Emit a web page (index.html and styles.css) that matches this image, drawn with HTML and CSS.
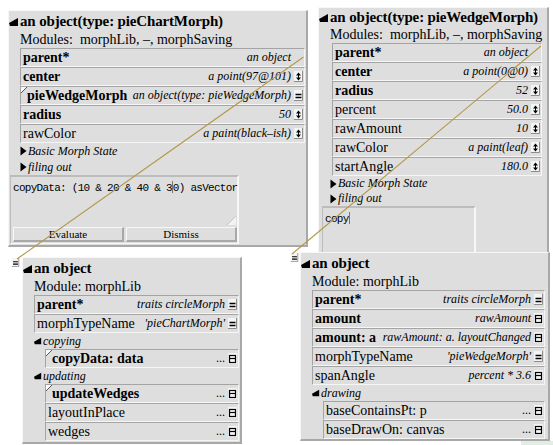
FILE: index.html
```html
<!DOCTYPE html>
<html>
<head>
<meta charset="utf-8">
<link rel="stylesheet" href="styles.css">
</head>
<body>
<svg class="defs" width="0" height="0">
  <defs>
    <symbol id="ud" viewBox="0 0 9 11">
      <rect x="0" y="0" width="9" height="11" fill="#f4f4f4"/>
      <path d="M8.5 0V10.5H0" fill="none" stroke="#8c8c8c"/>
      <path d="M2 4.5L4.5 1.5L7 4.5Z M2 6.5L4.5 9.5L7 6.5Z" fill="#000"/>
      <path d="M4.5 4V7" stroke="#000" stroke-width="1"/>
    </symbol>
    <symbol id="eq" viewBox="0 0 9 11">
      <rect x="0" y="0" width="9" height="11" fill="#f4f4f4"/>
      <path d="M8.5 0V10.5H0" fill="none" stroke="#8c8c8c"/>
      <path d="M1.5 4.5H7.5M1.5 7.5H7.5" stroke="#000" stroke-width="1.3"/>
    </symbol>
    <symbol id="box" viewBox="0 0 9 11">
      <rect x="0" y="0" width="9" height="11" fill="#f4f4f4"/>
      <rect x="1.5" y="2.5" width="6" height="7" fill="none" stroke="#000" stroke-width="1.2"/>
      <path d="M1.5 5.5H7.5" stroke="#000" stroke-width="1.2"/>
    </symbol>
    <symbol id="tri" viewBox="0 0 10 10">
      <path d="M0 6L9 1L9 9L1 9Z" fill="#000"/>
    </symbol>
    <symbol id="rtri" viewBox="0 0 7 10">
      <path d="M0.5 0.5L6.5 5L0.5 9.5Z" fill="#000"/>
    </symbol>
    <symbol id="mark" viewBox="0 0 6 6">
      <path d="M0 0H6L0 6Z" fill="#fafafa"/>
      <path d="M6 0L0 6" stroke="#555" stroke-width="1"/>
    </symbol>
  </defs>
</svg>

<!-- pieChartMorph outliner -->
<div class="outliner ol-chart">
  <div class="ol-title"><svg class="tri"><use href="#tri"/></svg><span>an object(type: pieChartMorph)</span></div>
  <div class="ol-module">Modules:&nbsp; morphLib, –, morphSaving</div>
  <div class="slots">
    <div class="slot"><span class="name b">parent*</span><span class="val">an object</span><span class="nobtn"></span></div>
    <div class="slot"><span class="name b">center</span><span class="val">a point(97@101)</span><svg class="btn"><use href="#ud"/></svg></div>
    <div class="slot"><svg class="mark"><use href="#mark"/></svg><span class="name b">pieWedgeMorph</span><span class="val">an object(type: pieWedgeMorph)</span><svg class="btn"><use href="#eq"/></svg></div>
    <div class="slot"><span class="name b">radius</span><span class="val">50</span><svg class="btn"><use href="#ud"/></svg></div>
    <div class="slot"><span class="name">rawColor</span><span class="val">a paint(black–ish)</span><svg class="btn"><use href="#ud"/></svg></div>
  </div>
  <div class="cat"><svg class="rtri"><use href="#rtri"/></svg><span>Basic Morph State</span></div>
  <div class="cat"><svg class="rtri"><use href="#rtri"/></svg><span>filing out</span></div>
  <div class="evaluator ev-chart">
    <div class="ev-text">copyData: (10 &amp; 20 &amp; 40 &amp; 3<span class="cursor"></span>0) asVector</div>
    <svg class="grip" width="9" height="9" viewBox="0 0 9 9"><path d="M9 0V9H0Z" fill="#f2f2f2"/><path d="M0 9L9 0" stroke="#c4c4c4"/></svg>
    <div class="ev-buttons">
      <div class="ev-btn">Evaluate</div>
      <div class="ev-btn">Dismiss</div>
    </div>
  </div>
</div>

<!-- pieWedgeMorph outliner -->
<div class="outliner ol-wedge">
  <div class="ol-title"><svg class="tri"><use href="#tri"/></svg><span>an object(type: pieWedgeMorph)</span></div>
  <div class="ol-module">Modules:&nbsp; morphLib, –, morphSaving</div>
  <div class="slots">
    <div class="slot"><span class="name b">parent*</span><span class="val">an object</span><span class="nobtn"></span></div>
    <div class="slot"><span class="name b">center</span><span class="val">a point(0@0)</span><svg class="btn"><use href="#ud"/></svg></div>
    <div class="slot"><span class="name b">radius</span><span class="val">52</span><svg class="btn"><use href="#ud"/></svg></div>
    <div class="slot"><span class="name">percent</span><span class="val">50.0</span><svg class="btn"><use href="#ud"/></svg></div>
    <div class="slot"><span class="name">rawAmount</span><span class="val">10</span><svg class="btn"><use href="#ud"/></svg></div>
    <div class="slot"><span class="name">rawColor</span><span class="val">a paint(leaf)</span><svg class="btn"><use href="#ud"/></svg></div>
    <div class="slot"><span class="name">startAngle</span><span class="val">180.0</span><svg class="btn"><use href="#ud"/></svg></div>
  </div>
  <div class="cat"><svg class="rtri"><use href="#rtri"/></svg><span>Basic Morph State</span></div>
  <div class="cat"><svg class="rtri"><use href="#rtri"/></svg><span>filing out</span></div>
  <div class="evaluator ev-wedge">
    <div class="ev-text">copy<span class="cursor"></span></div>
  </div>
</div>

<!-- traits pieWedge (lower right) -->
<svg class="handle h-right"><use href="#eq"/></svg>
<div class="outliner ol-twedge">
  <div class="ol-title"><svg class="tri"><use href="#tri"/></svg><span>an object</span></div>
  <div class="ol-module">Module: morphLib</div>
  <div class="slots">
    <div class="slot"><span class="name b">parent*</span><span class="val">traits circleMorph</span><svg class="btn"><use href="#eq"/></svg></div>
    <div class="slot"><span class="name b">amount</span><span class="val">rawAmount</span><svg class="btn"><use href="#box"/></svg></div>
    <div class="slot"><span class="name b">amount: a</span><span class="val">rawAmount: a. layoutChanged</span><svg class="btn"><use href="#box"/></svg></div>
    <div class="slot"><span class="name">morphTypeName</span><span class="val">'pieWedgeMorph'</span><svg class="btn"><use href="#eq"/></svg></div>
    <div class="slot"><span class="name">spanAngle</span><span class="val">percent * 3.6</span><svg class="btn"><use href="#box"/></svg></div>
  </div>
  <div class="cat"><svg class="tri small"><use href="#tri"/></svg><span>drawing</span></div>
  <div class="slots sub">
    <div class="slot"><span class="name">baseContainsPt: p</span><span class="val dots">...</span><svg class="btn"><use href="#box"/></svg></div>
    <div class="slot"><span class="name">baseDrawOn: canvas</span><span class="val dots">...</span><svg class="btn"><use href="#box"/></svg></div>
  </div>
</div>

<!-- traits pieChart (lower left) -->
<svg class="handle h-left"><use href="#eq"/></svg>
<div class="outliner ol-tchart">
  <div class="ol-title"><svg class="tri"><use href="#tri"/></svg><span>an object</span></div>
  <div class="ol-module">Module: morphLib</div>
  <div class="slots">
    <div class="slot"><span class="name b">parent*</span><span class="val">traits circleMorph</span><svg class="btn"><use href="#eq"/></svg></div>
    <div class="slot"><span class="name">morphTypeName</span><span class="val">'pieChartMorph'</span><svg class="btn"><use href="#eq"/></svg></div>
  </div>
  <div class="cat"><svg class="tri small"><use href="#tri"/></svg><span>copying</span></div>
  <div class="slots sub">
    <div class="slot"><svg class="mark"><use href="#mark"/></svg><span class="name b">copyData: data</span><span class="val dots">...</span><svg class="btn"><use href="#box"/></svg></div>
  </div>
  <div class="cat"><svg class="tri small"><use href="#tri"/></svg><span>updating</span></div>
  <div class="slots sub">
    <div class="slot"><svg class="mark"><use href="#mark"/></svg><span class="name b">updateWedges</span><span class="val dots">...</span><svg class="btn"><use href="#box"/></svg></div>
    <div class="slot"><span class="name">layoutInPlace</span><span class="val dots">...</span><svg class="btn"><use href="#box"/></svg></div>
    <div class="slot"><span class="name">wedges</span><span class="val dots">...</span><svg class="btn"><use href="#box"/></svg></div>
  </div>
</div>

<div class="corner-tab"></div>

<svg class="arrows" width="553" height="445" viewBox="0 0 553 445">
  <line x1="303.5" y1="57" x2="17" y2="259" stroke="#b39848" stroke-width="1.1"/>
  <line x1="541" y1="46" x2="292" y2="254" stroke="#b39848" stroke-width="1.1"/>
</svg>
</body>
</html>
```

FILE: styles.css
```css
html, body {
  margin: 0;
  padding: 0;
}
body {
  position: relative;
  width: 553px;
  height: 445px;
  overflow: hidden;
  background: #ffffff;
  font-family: "Liberation Serif", "DejaVu Serif", serif;
  color: #000;
}
.defs {
  position: absolute;
  width: 0;
  height: 0;
}

/* outliner window */
.outliner {
  position: absolute;
  box-sizing: border-box;
  background: #dedede;
  border-top: 1px solid #f7f7f7;
  border-left: 1px solid #f7f7f7;
  border-right: 2px solid #a8a8a8;
  border-bottom: 2px solid #a8a8a8;
  display: flex;
  flex-direction: column;
  overflow: hidden;
}
.ol-chart { left: 8px; top: 10px; width: 300px; height: 237px; }
.ol-wedge { left: 318px; top: 7px; width: 231px; height: 250px; }
.ol-twedge { left: 300px; top: 252px; width: 250px; height: 189px; }
.ol-tchart { left: 22px; top: 257px; width: 220px; height: 187px; }

.ol-title {
  height: 19px;
  margin-top: 1px;
  display: flex;
  align-items: center;
  font-weight: bold;
  font-size: 15px;
  letter-spacing: -0.15px;
  white-space: nowrap;
  padding-left: 0;
}
.tri {
  width: 10px;
  height: 10px;
  margin-right: 1px;
  flex: none;
}
.tri.small {
  width: 8px;
  height: 8px;
}
.rtri {
  width: 7px;
  height: 10px;
  margin-right: 1px;
  flex: none;
}
.ol-module {
  height: 17px;
  line-height: 17px;
  font-size: 14px;
  padding-left: 11px;
  white-space: nowrap;
}

.slots {
  display: flex;
  flex-direction: column;
  margin-left: 11px;
  margin-right: 1px;
}
.ol-wedge .slots { margin-left: 13px; margin-right: 5px; }
.ol-twedge .slots { margin-right: 3px; }
.slots.sub { margin-left: 22px; }

.slot {
  height: 19px;
  box-sizing: border-box;
  border: 1px solid;
  border-color: #a4a4a4 #f6f6f6 #f6f6f6 #a4a4a4;
  display: flex;
  align-items: center;
  padding: 0 1px 0 2px;
  position: relative;
}
.name {
  font-size: 14px;
  white-space: nowrap;
  flex: none;
}
.name.b { font-weight: bold; }
.val {
  flex: 1;
  min-width: 0;
  text-align: right;
  font-style: italic;
  font-size: 12px;
  white-space: nowrap;
  overflow: hidden;
  padding: 0 3px 0 4px;
}
.val.dots { font-style: normal; }
.btn {
  width: 9px;
  height: 11px;
  flex: none;
}
.nobtn {
  width: 9px;
  height: 11px;
  flex: none;
}
.mark {
  position: absolute;
  left: 0;
  top: 0;
  width: 6px;
  height: 6px;
}
.slot .mark + .name { margin-left: 4px; }

.cat {
  height: 16px;
  display: flex;
  align-items: center;
  font-style: italic;
  font-size: 12px;
  padding-left: 11px;
  white-space: nowrap;
}

/* evaluator */
.evaluator {
  position: relative;
  box-sizing: border-box;
  border-top: 2px solid #bcbcbc;
  border-left: 1px solid #bcbcbc;
  border-right: 2px solid #f7f7f7;
  border-bottom: 1px solid #f7f7f7;
  background: #dedede;
  display: flex;
  flex-direction: column;
}
.ev-chart {
  width: 229px;
  height: 69px;
  margin-left: 1px;
}
.ev-wedge {
  width: 154px;
  height: 60px;
  margin-left: 3px;
}
.ev-text {
  font-family: "Liberation Mono", "DejaVu Sans Mono", monospace;
  font-size: 11px;
  letter-spacing: -0.72px;
  padding: 4px 0 0 2px;
  white-space: nowrap;
  flex: 1;
  line-height: 13px;
}
.cursor {
  display: inline-block;
  width: 1px;
  height: 12px;
  background: #777;
  vertical-align: -2px;
}
.grip {
  position: absolute;
  right: 1px;
  bottom: 18px;
}
.ev-buttons {
  display: flex;
  gap: 2px;
  padding: 0 0 0 2px;
  height: 16px;
}
.ev-btn {
  flex: 1;
  box-sizing: border-box;
  height: 15px;
  border-top: 1px solid #f7f7f7;
  border-left: 1px solid #f7f7f7;
  border-right: 2px solid #a8a8a8;
  border-bottom: 2px solid #a8a8a8;
  font-size: 11px;
  line-height: 12px;
  text-align: center;
  background: #dedede;
}

/* drag handles of the lower outliners */
.handle {
  position: absolute;
  width: 9px;
  height: 9px;
}
.h-left { left: 11px; top: 258px; }
.h-right { left: 290px; top: 253px; }

.corner-tab {
  position: absolute;
  left: 521px;
  top: 441px;
  width: 32px;
  height: 4px;
  background: #e0efe6;
}

.arrows {
  position: absolute;
  left: 0;
  top: 0;
  pointer-events: none;
}
```
